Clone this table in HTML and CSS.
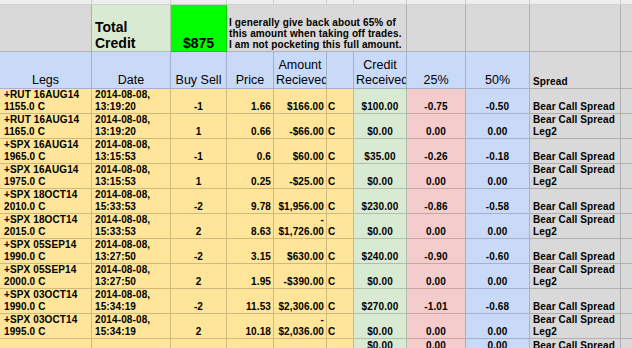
FILE: index.html
```html
<!DOCTYPE html>
<html>
<head>
<meta charset="utf-8">
<link rel="stylesheet" href="styles.css">
</head>
<body>
<div class="sheet">
  <!-- partial top row -->
  <div class="c t"></div><div class="c t"></div><div class="c t"></div><div class="c t"></div><div class="c t"></div><div class="c t"></div><div class="c t"></div><div class="c t"></div><div class="c t"></div><div class="c t"></div><div class="c t"></div>

  <!-- total row -->
  <div class="c gr"></div>
  <div class="c g tc"><span>Total<br>Credit</span></div>
  <div class="c bg tot"><span>$875</span></div>
  <div class="c gr note"><span>I generally give back about 65% of<br>this amount when taking off trades.<br>I am not pocketing this full amount.</span></div>
  <div class="c gr"></div><div class="c gr"></div><div class="c gr"></div><div class="c gr"></div>

  <!-- header row -->
  <div class="c b h"><span>Legs</span></div>
  <div class="c b h"><span>Date</span></div>
  <div class="c b h"><span>Buy Sell</span></div>
  <div class="c b h"><span>Price</span></div>
  <div class="c b h"><span>Amount<br>Recieved</span></div>
  <div class="c b h"></div>
  <div class="c b h"><span>Credit<br>Received</span></div>
  <div class="c b h"><span>25%</span></div>
  <div class="c b h"><span>50%</span></div>
  <div class="c gr d sp"><span>Spread</span></div>
  <div class="c gr"></div>

  <!-- row 1 -->
  <div class="c y d la"><span>+RUT 16AUG14<br>1155.0 C</span></div>
  <div class="c y d lb"><span>2014-08-08,<br>13:19:20</span></div>
  <div class="c y d m"><span>-1</span></div>
  <div class="c y d r"><span>1.66</span></div>
  <div class="c y d r"><span>$166.00</span></div>
  <div class="c y d lc"><span>C</span></div>
  <div class="c g d m"><span>$100.00</span></div>
  <div class="c p d m"><span>-0.75</span></div>
  <div class="c b d m"><span>-0.50</span></div>
  <div class="c gr d lb"><span>Bear Call Spread</span></div>
  <div class="c gr"></div>

  <!-- row 2 -->
  <div class="c y d la"><span>+RUT 16AUG14<br>1165.0 C</span></div>
  <div class="c y d lb"><span>2014-08-08,<br>13:19:20</span></div>
  <div class="c y d m"><span>1</span></div>
  <div class="c y d r"><span>0.66</span></div>
  <div class="c y d r"><span>-$66.00</span></div>
  <div class="c y d lc"><span>C</span></div>
  <div class="c g d m"><span>$0.00</span></div>
  <div class="c p d m"><span>0.00</span></div>
  <div class="c b d m"><span>0.00</span></div>
  <div class="c gr d lb"><span>Bear Call Spread<br>Leg2</span></div>
  <div class="c gr"></div>

  <!-- row 3 -->
  <div class="c y d la"><span>+SPX 16AUG14<br>1965.0 C</span></div>
  <div class="c y d lb"><span>2014-08-08,<br>13:15:53</span></div>
  <div class="c y d m"><span>-1</span></div>
  <div class="c y d r"><span>0.6</span></div>
  <div class="c y d r"><span>$60.00</span></div>
  <div class="c y d lc"><span>C</span></div>
  <div class="c g d m"><span>$35.00</span></div>
  <div class="c p d m"><span>-0.26</span></div>
  <div class="c b d m"><span>-0.18</span></div>
  <div class="c gr d lb"><span>Bear Call Spread</span></div>
  <div class="c gr"></div>

  <!-- row 4 -->
  <div class="c y d la"><span>+SPX 16AUG14<br>1975.0 C</span></div>
  <div class="c y d lb"><span>2014-08-08,<br>13:15:53</span></div>
  <div class="c y d m"><span>1</span></div>
  <div class="c y d r"><span>0.25</span></div>
  <div class="c y d r"><span>-$25.00</span></div>
  <div class="c y d lc"><span>C</span></div>
  <div class="c g d m"><span>$0.00</span></div>
  <div class="c p d m"><span>0.00</span></div>
  <div class="c b d m"><span>0.00</span></div>
  <div class="c gr d lb"><span>Bear Call Spread<br>Leg2</span></div>
  <div class="c gr"></div>

  <!-- row 5 -->
  <div class="c y d la"><span>+SPX 18OCT14<br>2010.0 C</span></div>
  <div class="c y d lb"><span>2014-08-08,<br>15:33:53</span></div>
  <div class="c y d m"><span>-2</span></div>
  <div class="c y d r"><span>9.78</span></div>
  <div class="c y d r"><span>$1,956.00</span></div>
  <div class="c y d lc"><span>C</span></div>
  <div class="c g d m"><span>$230.00</span></div>
  <div class="c p d m"><span>-0.86</span></div>
  <div class="c b d m"><span>-0.58</span></div>
  <div class="c gr d lb"><span>Bear Call Spread</span></div>
  <div class="c gr"></div>

  <!-- row 6 -->
  <div class="c y d la"><span>+SPX 18OCT14<br>2015.0 C</span></div>
  <div class="c y d lb"><span>2014-08-08,<br>15:33:53</span></div>
  <div class="c y d m"><span>2</span></div>
  <div class="c y d r"><span>8.63</span></div>
  <div class="c y d r"><span>-<br>$1,726.00</span></div>
  <div class="c y d lc"><span>C</span></div>
  <div class="c g d m"><span>$0.00</span></div>
  <div class="c p d m"><span>0.00</span></div>
  <div class="c b d m"><span>0.00</span></div>
  <div class="c gr d lb"><span>Bear Call Spread<br>Leg2</span></div>
  <div class="c gr"></div>

  <!-- row 7 -->
  <div class="c y d la"><span>+SPX 05SEP14<br>1990.0 C</span></div>
  <div class="c y d lb"><span>2014-08-08,<br>13:27:50</span></div>
  <div class="c y d m"><span>-2</span></div>
  <div class="c y d r"><span>3.15</span></div>
  <div class="c y d r"><span>$630.00</span></div>
  <div class="c y d lc"><span>C</span></div>
  <div class="c g d m"><span>$240.00</span></div>
  <div class="c p d m"><span>-0.90</span></div>
  <div class="c b d m"><span>-0.60</span></div>
  <div class="c gr d lb"><span>Bear Call Spread</span></div>
  <div class="c gr"></div>

  <!-- row 8 -->
  <div class="c y d la"><span>+SPX 05SEP14<br>2000.0 C</span></div>
  <div class="c y d lb"><span>2014-08-08,<br>13:27:50</span></div>
  <div class="c y d m"><span>2</span></div>
  <div class="c y d r"><span>1.95</span></div>
  <div class="c y d r"><span>-$390.00</span></div>
  <div class="c y d lc"><span>C</span></div>
  <div class="c g d m"><span>$0.00</span></div>
  <div class="c p d m"><span>0.00</span></div>
  <div class="c b d m"><span>0.00</span></div>
  <div class="c gr d lb"><span>Bear Call Spread<br>Leg2</span></div>
  <div class="c gr"></div>

  <!-- row 9 -->
  <div class="c y d la"><span>+SPX 03OCT14<br>1990.0 C</span></div>
  <div class="c y d lb"><span>2014-08-08,<br>15:34:19</span></div>
  <div class="c y d m"><span>-2</span></div>
  <div class="c y d r"><span>11.53</span></div>
  <div class="c y d r"><span>$2,306.00</span></div>
  <div class="c y d lc"><span>C</span></div>
  <div class="c g d m"><span>$270.00</span></div>
  <div class="c p d m"><span>-1.01</span></div>
  <div class="c b d m"><span>-0.68</span></div>
  <div class="c gr d lb"><span>Bear Call Spread</span></div>
  <div class="c gr"></div>

  <!-- row 10 -->
  <div class="c y d la"><span>+SPX 03OCT14<br>1995.0 C</span></div>
  <div class="c y d lb"><span>2014-08-08,<br>15:34:19</span></div>
  <div class="c y d m"><span>2</span></div>
  <div class="c y d r"><span>10.18</span></div>
  <div class="c y d r"><span>-<br>$2,036.00</span></div>
  <div class="c y d lc"><span>C</span></div>
  <div class="c g d m"><span>$0.00</span></div>
  <div class="c p d m"><span>0.00</span></div>
  <div class="c b d m"><span>0.00</span></div>
  <div class="c gr d lb"><span>Bear Call Spread<br>Leg2</span></div>
  <div class="c gr"></div>

  <!-- row 11 (partial) -->
  <div class="c y"></div>
  <div class="c y"></div>
  <div class="c y"></div>
  <div class="c y"></div>
  <div class="c y"></div>
  <div class="c y"></div>
  <div class="c g d m"><span>$0.00</span></div>
  <div class="c p d m"><span>0.00</span></div>
  <div class="c b d m"><span>0.00</span></div>
  <div class="c gr d lb"><span>Bear Call Spread</span></div>
  <div class="c gr"></div>
</div>
</body>
</html>
```

FILE: styles.css
```css
html, body {
  margin: 0;
  padding: 0;
  overflow: hidden;
  background: #ffffff;
}

.sheet {
  display: grid;
  grid-template-columns: 92px 79px 56px 47px 53px 27px 53px 59px 64px 91px 40px;
  grid-template-rows: 5px 47px 37px repeat(10, 25px) 14px;
  width: 661px;
  font-family: "Liberation Sans", Arial, sans-serif;
  color: #000;
}

.c {
  box-sizing: border-box;
  border-right: 1px solid rgba(0, 0, 0, 0.19);
  border-bottom: 1px solid rgba(0, 0, 0, 0.19);
  display: flex;
  align-items: flex-end;
  overflow: hidden;
  min-width: 0;
}

.c > span {
  flex: 1 1 auto;
  min-width: 0;
  white-space: nowrap;
}

/* fills */
.t { background: #eeeeee; border-color: #cfcfcf; }
.gr { background: #d9d9d9; }
.g { background: #d9ead3; }
.bg { background: #00ff00; }
.y { background: #ffe599; }
.p { background: #f4cccc; }
.b { background: #c9daf8; }

/* total row */
.tc > span {
  font-size: 14px;
  font-weight: bold;
  line-height: 16px;
  padding-left: 3px;
}

.tot > span {
  font-size: 14px;
  font-weight: bold;
  line-height: 16px;
  text-align: center;
}

.note {
  grid-column: span 4;
}

.note > span {
  font-size: 10px;
  font-weight: bold;
  line-height: 11px;
  letter-spacing: 0.12px;
  padding-left: 2px;
  padding-bottom: 1px;
}

/* header row */
.h > span {
  font-size: 12.5px;
  line-height: 15px;
  text-align: center;
  padding: 0 2px;
}

/* data cells */
.d > span {
  font-size: 10px;
  font-weight: bold;
  line-height: 12px;
  letter-spacing: 0.12px;
}

.sp > span {
  padding-left: 3px;
}

.la > span { padding-left: 4px; }
.lb > span { padding-left: 3px; }
.lc > span { padding-left: 1px; }
.m > span { text-align: center; }
.r > span { text-align: right; padding-right: 2px; }
```
